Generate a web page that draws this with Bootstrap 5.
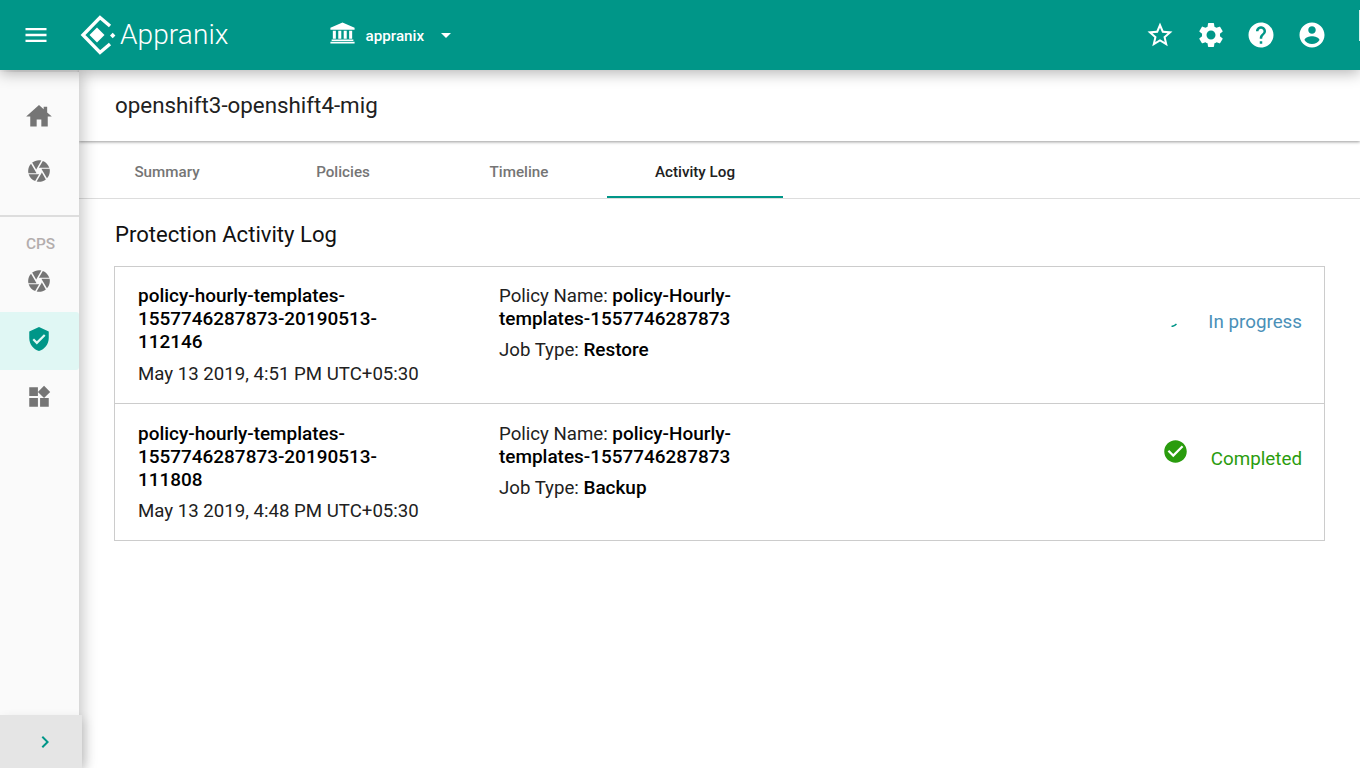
<!DOCTYPE html>
<html lang="en">
<head>
  <meta charset="UTF-8">
  <meta name="viewport" content="width=device-width, initial-scale=1.0">
  <title>Appranix</title>
  <link href="https://cdn.jsdelivr.net/npm/bootstrap@5.3.0/dist/css/bootstrap.min.css" rel="stylesheet">
  <style>
    html, body { height: 100%; overflow: hidden; }
    body { font-family: Roboto, "Liberation Sans", sans-serif; color: #000; background: #fff; }
    svg { fill: currentColor; display: block; flex: none; }

    /* top bar */
    .app-bar { height: 70px; padding: 0 33px 0 22px; background: #009688; color: #fff; box-shadow: 0 3px 14px rgba(0,0,0,.3); position: relative; z-index: 3; flex-wrap: nowrap; }
    .app-bar::after { content: ""; position: absolute; right: 0; top: 10px; width: 1px; height: 31px; background: #d8f0ed; }
    .brand-wrap { margin-left: 30px; }
    .brand-name { font-size: 28px; font-weight: 300; letter-spacing: .1px; margin-left: 2px; line-height: 1; }
    .org-pick { margin-left: 99px; font-size: 15.2px; font-weight: 500; }
    .org-name { margin: 2px 10px 0 9px; }
    .bar-actions { gap: 20.7px; }

    /* side rail */
    .app-body { height: 698px; }
    .side-rail { width: 79px; margin-top: 2px; background: #fafafa; color: #757575; box-shadow: 4px 0 14px rgba(0,0,0,.22); position: relative; z-index: 2; }
    .rail-item { height: 55px; padding-right: 1px; }
    .rail-active { height: 58px; padding: 0 1px 4px 0; background: #e0f7f4; color: #009688; border-radius: 0 3px 3px 0; }
    .rail-plain { height: 58px; padding: 0 1px 4px 0; }
    .rail-sep { border-top: 2px solid #ddd; margin: 17px 0; }
    .rail-label { font-size: 15.4px; font-weight: 500; color: #b3adad; text-align: center; line-height: 20px; margin-left: 2px; }
    .rail-cam { height: 54px; margin-bottom: 4px; padding-right: 1px; }
    .rail-toggle { width: 82px; height: 53px; background: #e5e5e5; color: #009688; position: absolute; left: 0; bottom: 0; padding-left: 8px; box-shadow: 3px 4px 10px rgba(0,0,0,.12); }

    /* page */
    .page-head { height: 71px; padding-left: 36px; font-size: 22.35px; font-weight: 400; color: #212121; box-shadow: 0 1px 3px rgba(0,0,0,.4); position: relative; z-index: 1; }
    .tab-row { height: 58px; border-bottom: 1px solid #ddd; }
    .tab-row .nav-link { width: 176px; height: 57px; padding: 8px 0 0; display: flex; align-items: center; justify-content: center; font-size: 15.2px; font-weight: 500; color: #757575; border-bottom: 2px solid transparent; border-radius: 0; }
    .tab-row .nav-link.active { color: #212121; border-bottom-color: #009688; }
    .log-wrap { padding: 0 35px; }
    .log-title { font-size: 22.1px; font-weight: 400; line-height: 28px; margin: 21px 0 18px 1px; color: #111; }
    .log-list { border-radius: 0; --bs-list-group-border-color: #ccc; }
    .log-row { height: 138px; padding: 18px 22px 0 23px; font-size: 18.65px; line-height: 23px; }
    .log-row:last-child { height: 137px; padding-top: 19px; }
    .log-name { width: 361px; padding-right: 80px; }
    .log-date { margin-top: 9px; color: #212121; }
    .log-row:last-child .log-date { margin-top: 8px; }
    .log-policy { width: 250px; color: #212121; }
    .log-policy b, .log-name b { font-size: 18.95px; font-weight: 500; line-height: 1; color: #000; }
    .log-job { margin-top: 8px; }
    .log-status { margin-left: auto; margin-top: 26px; font-size: 18.8px; }
    .log-row:last-child .log-status { margin-top: 25px; }
    .st-run { color: #4a90b8; }
    .st-done { color: #2a9c0e; }
    .spin-bit { margin: 12px 31px 0 0; }
    .done-icon { margin: -10px 22px 0 0; }
  </style>
</head>
<body>
  <nav class="navbar app-bar">
    <div class="d-flex align-items-center">
      <svg width="28" height="28" viewBox="0 0 24 24"><path d="M3 18h18v-2H3v2zm0-5h18v-2H3v2zm0-7v2h18V6H3z"/></svg>
      <div class="d-flex align-items-center brand-wrap">
        <svg width="38" height="40" viewBox="0 0 38 40" style="fill:none">
          <path d="M30 11 L20 2.5 L3 20 L20 37.5 L30 29" stroke="#fff" stroke-width="3.4"/>
          <path d="M17 12.5 L24.5 20 L17 27.5 L9.5 20 Z" fill="#fff"/>
          <path d="M32.7 17.8 L35.4 20.5 L32.7 23.2 L30 20.5 Z" fill="#fff"/>
        </svg>
        <span class="brand-name">Appranix</span>
      </div>
      <div class="d-flex align-items-center org-pick">
        <svg width="29" height="29" viewBox="0 0 24 24"><path d="M12 1.200L2 5.500v1.700h20V5.500zM4 8h2.500v6.700H4zM8.500 8H11v6.700H8.500zM13 8h2.500v6.700H13zM17.500 8H20v6.700h-2.500zM3 15.400h18v1.200H3zM2 17.200h20v1.400H2z"/></svg>
        <span class="org-name">appranix</span>
        <svg width="24" height="24" viewBox="0 0 24 24"><path d="M7 10l5 5 5-5z"/></svg>
      </div>
    </div>
    <div class="d-flex align-items-center bar-actions">
      <svg width="30" height="30" viewBox="0 0 24 24"><path d="M22 9.24l-7.19-.62L12 2 9.19 8.63 2 9.24l5.46 4.73L5.82 21 12 17.27 18.18 21l-1.63-7.03L22 9.24zM12 15.4l-3.76 2.27 1-4.28-3.32-2.88 4.38-.38L12 6.1l1.71 4.04 4.38.38-3.32 2.88 1 4.28L12 15.4z"/></svg>
      <svg width="30" height="30" viewBox="0 0 24 24"><path d="M19.14 12.94c.04-.3.06-.61.06-.94 0-.32-.02-.64-.07-.94l2.03-1.58c.18-.14.23-.41.12-.61l-1.92-3.32c-.12-.22-.37-.29-.59-.22l-2.39.96c-.5-.38-1.03-.7-1.62-.94l-.36-2.54c-.04-.24-.24-.41-.48-.41h-3.84c-.24 0-.43.17-.47.41l-.36 2.54c-.59.24-1.13.57-1.62.94l-2.39-.96c-.22-.08-.47 0-.59.22L2.74 8.87c-.12.21-.08.47.12.61l2.03 1.58c-.05.3-.09.63-.09.94s.02.64.07.94l-2.03 1.58c-.18.14-.23.41-.12.61l1.92 3.32c.12.22.37.29.59.22l2.39-.96c.5.38 1.03.7 1.62.94l.36 2.54c.05.24.24.41.48.41h3.84c.24 0 .44-.17.47-.41l.36-2.54c.59-.24 1.13-.56 1.62-.94l2.39.96c.22.08.47 0 .59-.22l1.92-3.32c.12-.22.07-.47-.12-.61l-2.01-1.58zM12 15.6c-1.98 0-3.6-1.62-3.6-3.6s1.62-3.6 3.6-3.6 3.6 1.62 3.6 3.6-1.62 3.6-3.6 3.6z"/></svg>
      <svg width="30" height="30" viewBox="0 0 24 24"><path d="M12 2C6.48 2 2 6.48 2 12s4.48 10 10 10 10-4.48 10-10S17.52 2 12 2zm1 17h-2v-2h2v2zm2.07-7.75l-.9.92C13.45 12.9 13 13.5 13 15h-2v-.5c0-1.1.45-2.1 1.17-2.83l1.24-1.26c.37-.36.59-.86.59-1.41 0-1.1-.9-2-2-2s-2 .9-2 2H8c0-2.21 1.79-4 4-4s4 1.79 4 4c0 .88-.36 1.68-.93 2.25z"/></svg>
      <svg width="30" height="30" viewBox="0 0 24 24"><path d="M12 2C6.48 2 2 6.48 2 12s4.48 10 10 10 10-4.48 10-10S17.52 2 12 2zm0 3c1.66 0 3 1.34 3 3s-1.34 3-3 3-3-1.34-3-3 1.34-3 3-3zm0 14.2c-2.5 0-4.71-1.28-6-3.22.03-1.99 4-3.08 6-3.08 1.99 0 5.97 1.09 6 3.08-1.29 1.94-3.5 3.22-6 3.22z"/></svg>
    </div>
  </nav>

  <div class="d-flex app-body">
    <aside class="side-rail flex-shrink-0">
      <div class="rail-item d-flex align-items-center justify-content-center" style="margin-top:16px">
        <svg width="28" height="28" viewBox="0 0 24 24"><path d="M10 21v-6h4v6h5.5v-8.500H23L19 8.900V4h-3v2.200L12 2.500 1 12.500h3.500V21z"/></svg>
      </div>
      <div class="rail-item d-flex align-items-center justify-content-center">
        <svg width="26" height="26" viewBox="0 0 24 24"><path d="M9.4 10.5l4.77-8.26C13.47 2.09 12.75 2 12 2c-2.4 0-4.6.85-6.32 2.25l3.66 6.35.06-.1zM21.54 9c-.92-2.92-3.15-5.26-6-6.34L11.88 9h9.66zm.26 1h-7.49l.29.5 4.76 8.25C21 16.97 22 14.61 22 12c0-.69-.07-1.35-.2-2zM8.54 12l-3.9-6.75C3.01 7.03 2 9.39 2 12c0 .69.07 1.35.2 2h7.49l-1.15-2zm-6.08 3c.92 2.92 3.15 5.26 6 6.34L12.12 15H2.46zm11.27 0l-3.9 6.76c.7.15 1.42.24 2.17.24 2.4 0 4.6-.85 6.32-2.25l-3.66-6.35-.93 1.6z"/></svg>
      </div>
      <div class="rail-sep"></div>
      <div class="rail-label">CPS</div>
      <div class="rail-cam d-flex align-items-center justify-content-center">
        <svg width="26" height="26" viewBox="0 0 24 24"><path d="M9.4 10.5l4.77-8.26C13.47 2.09 12.75 2 12 2c-2.4 0-4.6.85-6.32 2.25l3.66 6.35.06-.1zM21.54 9c-.92-2.92-3.15-5.26-6-6.34L11.88 9h9.66zm.26 1h-7.49l.29.5 4.76 8.25C21 16.97 22 14.61 22 12c0-.69-.07-1.35-.2-2zM8.54 12l-3.9-6.75C3.01 7.03 2 9.39 2 12c0 .69.07 1.35.2 2h7.49l-1.15-2zm-6.08 3c.92 2.92 3.15 5.26 6 6.34L12.12 15H2.46zm11.27 0l-3.9 6.76c.7.15 1.42.24 2.17.24 2.4 0 4.6-.85 6.32-2.25l-3.66-6.35-.93 1.6z"/></svg>
      </div>
      <div class="rail-active d-flex align-items-center justify-content-center">
        <svg width="26" height="26" viewBox="0 0 24 24"><path d="M12 1L3 5v6c0 5.55 3.84 10.74 9 12 5.16-1.26 9-6.45 9-12V5l-9-4zm-2 16l-4-4 1.41-1.41L10 14.17l6.59-6.59L18 9l-8 8z"/></svg>
      </div>
      <div class="rail-plain d-flex align-items-center justify-content-center">
        <svg width="26" height="26" viewBox="0 0 24 24"><path d="M13 13v8h8v-8h-8zM3 21h8v-8H3v8zM3 3v8h8V3H3zm13.66-1.31L11 7.34 16.66 13l5.66-5.66-5.66-5.65z"/></svg>
      </div>
      <div class="rail-toggle d-flex align-items-center justify-content-center">
        <svg width="24" height="24" viewBox="0 0 24 24"><path d="M10 6L8.59 7.41 13.17 12l-4.58 4.59L10 18l6-6z"/></svg>
      </div>
    </aside>

    <main class="flex-grow-1">
      <div class="page-head d-flex align-items-center">openshift3-openshift4-mig</div>
      <ul class="nav tab-row">
        <li class="nav-item"><a class="nav-link" href="#">Summary</a></li>
        <li class="nav-item"><a class="nav-link" href="#">Policies</a></li>
        <li class="nav-item"><a class="nav-link" href="#">Timeline</a></li>
        <li class="nav-item"><a class="nav-link active" href="#">Activity Log</a></li>
      </ul>
      <div class="log-wrap">
        <h2 class="log-title">Protection Activity Log</h2>
        <div class="list-group log-list">
          <div class="list-group-item d-flex log-row">
            <div class="log-name">
              <b>policy-hourly-templates-1557746287873-20190513-112146</b>
              <div class="log-date">May 13 2019, 4:51 PM UTC+05:30</div>
            </div>
            <div class="log-policy">
              <div>Policy Name: <b>policy-Hourly-templates-1557746287873</b></div>
              <div class="log-job">Job Type: <b>Restore</b></div>
            </div>
            <div class="log-status d-flex align-items-start st-run">
              <svg class="spin-bit" width="6" height="4" viewBox="0 0 6 4" style="fill:none"><path d="M.5 3.5C2 3.3 4 2.6 5.5 1" stroke="#009688" stroke-width="1.5"/></svg>
              <span>In progress</span>
            </div>
          </div>
          <div class="list-group-item d-flex log-row">
            <div class="log-name">
              <b>policy-hourly-templates-1557746287873-20190513-111808</b>
              <div class="log-date">May 13 2019, 4:48 PM UTC+05:30</div>
            </div>
            <div class="log-policy">
              <div>Policy Name: <b>policy-Hourly-templates-1557746287873</b></div>
              <div class="log-job">Job Type: <b>Backup</b></div>
            </div>
            <div class="log-status d-flex align-items-start st-done">
              <svg class="done-icon" width="27" height="27" viewBox="0 0 24 24"><path d="M12 2C6.48 2 2 6.48 2 12s4.48 10 10 10 10-4.48 10-10S17.52 2 12 2zm-2 15l-5-5 1.41-1.41L10 14.17l7.59-7.59L19 8l-9 9z"/></svg>
              <span>Completed</span>
            </div>
          </div>
        </div>
      </div>
    </main>
  </div>
  <script src="https://cdn.jsdelivr.net/npm/bootstrap@5.3.0/dist/js/bootstrap.bundle.min.js"></script>
</body>
</html>
